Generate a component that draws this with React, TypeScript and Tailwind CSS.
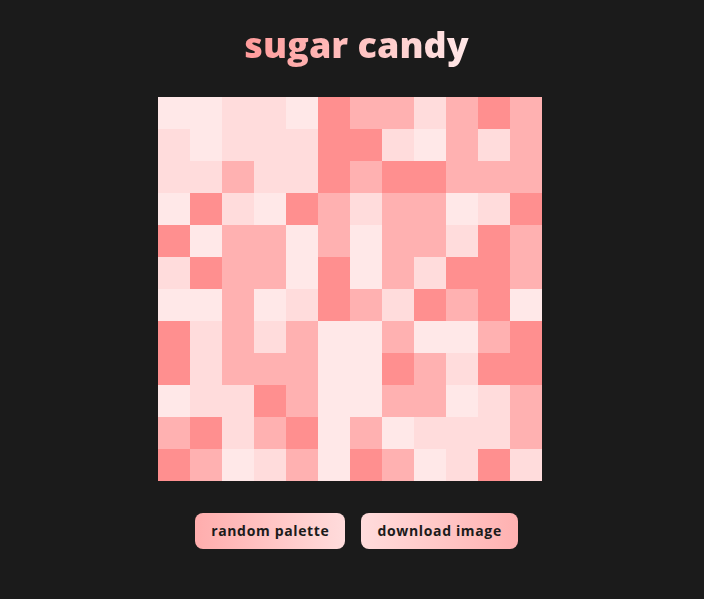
import React from "react";

const C: Record<string, string> = {
  L: "#ffe8e8",
  l: "#ffdcdc",
  M: "#ffb1b1",
  D: "#ff8f8f",
};

const rows = [
  "LLllLDMMlMDM",
  "lLlllDDlLMlM",
  "llMllDMDDMMM",
  "LDlLDMlMMLlD",
  "DLMMLMLMMlDM",
  "lDMMLDLMlDDM",
  "LLMLlDMlDMDL",
  "DlMlMLLMLLMD",
  "DlMMMLLDMlDD",
  "LllDMLLMMLlM",
  "MDlMDLMLlllM",
  "DMLlMLDMLlDl",
];

export default function App() {
  return (
    <div
      className="min-h-[599px] w-full bg-[#1b1b1b] flex flex-col items-center pt-[22px]"
      style={{ fontFamily: "'Open Sans', sans-serif" }}
    >
      <h1 className="ml-[9px] text-[36px] leading-[46px] font-extrabold bg-gradient-to-r from-[#ff9a9a] to-[#ffe8e8] bg-clip-text text-transparent">
        sugar candy
      </h1>
      <div className="mt-[29px] mr-[4px] grid grid-cols-[repeat(12,32px)] grid-rows-[repeat(12,32px)]">
        {rows.flatMap((r, i) =>
          r.split("").map((ch, j) => (
            <div key={`${i}-${j}`} style={{ backgroundColor: C[ch] }} />
          ))
        )}
      </div>
      <div className="mt-[32px] ml-[9px] flex gap-4">
        <button className="h-9 px-4 rounded-lg bg-gradient-to-r from-[#ffadad] to-[#ffdcdc] text-[#1b1b1b] text-sm font-bold tracking-[0.65px]">
          random palette
        </button>
        <button className="h-9 px-4 rounded-lg bg-gradient-to-r from-[#ffdcdc] to-[#ffb1b1] text-[#1b1b1b] text-sm font-bold tracking-[0.65px]">
          download image
        </button>
      </div>
    </div>
  );
}
